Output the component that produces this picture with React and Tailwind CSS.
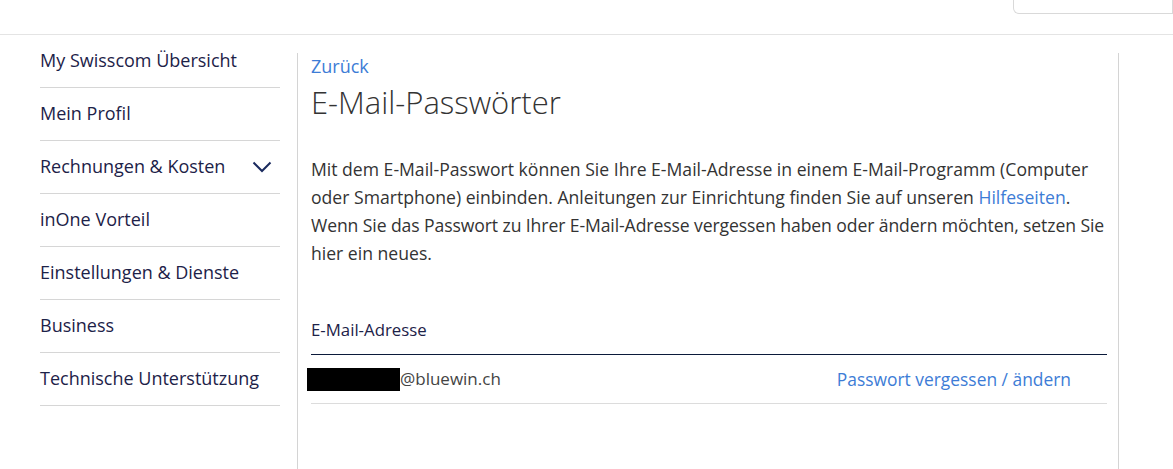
import React from 'react';

const navItems = [
  'My Swisscom Übersicht',
  'Mein Profil',
  'Rechnungen & Kosten',
  'inOne Vorteil',
  'Einstellungen & Dienste',
  'Business',
  'Technische Unterstützung',
];

const Chevron = () => (
  <svg width="20" height="12" viewBox="0 0 20 12" fill="none">
    <path d="M1.5 1.5 L10 10 L18.5 1.5" stroke="#1a2a5e" strokeWidth="2" />
  </svg>
);

const App = () => {
  return (
    <div className="w-[1173px] h-[469px] overflow-hidden bg-white font-['Open_Sans',sans-serif] text-[#333]">
      {/* header */}
      <div className="h-[35px] border-b border-[#e4e4e4] flex justify-end">
        <div className="w-[160px] h-[15px] -mt-px border border-t-0 border-[#d9d9d9] rounded-bl-[6px]" />
      </div>

      <div className="flex">
        {/* sidebar */}
        <nav className="w-[240px] ml-[40px] shrink-0">
          {navItems.map((item) => (
            <div
              key={item}
              className="h-[53px] border-b border-[#d6d6d6] flex items-center justify-between pr-[8px] text-[18px] text-[#1d2248]"
            >
              <span className="-mt-[1px]">{item}</span>
              {item === 'Rechnungen & Kosten' && <Chevron />}
            </div>
          ))}
        </nav>

        {/* main */}
        <main className="ml-[17px] mt-[18px] w-[822px] h-[420px] border-x border-[#d4d4d4] pl-[13px] pr-[11px]">
          <a className="block text-[18px] leading-[26px] text-[#3d7cd6]">Zurück</a>
          <h1 className="text-[31px] font-light leading-[40px] text-[#333] mt-[3px]">
            E-Mail-Passwörter
          </h1>

          <p className="mt-[33px] text-[17.6px] leading-[28px] text-[#333] whitespace-nowrap">
            Mit dem E-Mail-Passwort können Sie Ihre E-Mail-Adresse in einem E-Mail-Programm (Computer
            <br />
            oder Smartphone) einbinden. Anleitungen zur Einrichtung finden Sie auf unseren{' '}
            <a className="text-[#3d7cd6]">Hilfeseiten</a>.
            <br />
            <span className="tracking-[-0.1px]">
              Wenn Sie das Passwort zu Ihrer E-Mail-Adresse vergessen haben oder ändern möchten, setzen Sie
            </span>
            <br />
            hier ein neues.
          </p>

          <div className="mt-[40px]">
            <div className="h-[48px] flex items-center border-b border-[#0b1a3a] text-[16.8px] text-[#1d2248]">
              <span className="-mt-[2px]">E-Mail-Adresse</span>
            </div>
            <div className="h-[49px] flex items-center justify-between border-b border-[#dcdcdc]">
              <div className="flex items-center -ml-[4px]">
                <span className="w-[93px] h-[23px] bg-black" />
                <span className="text-[17px] text-[#444]">@bluewin.ch</span>
              </div>
              <a className="text-[17.4px] text-[#3d7cd6] mr-[36px]">Passwort vergessen / ändern</a>
            </div>
          </div>
        </main>
      </div>
    </div>
  );
};

export default App;
